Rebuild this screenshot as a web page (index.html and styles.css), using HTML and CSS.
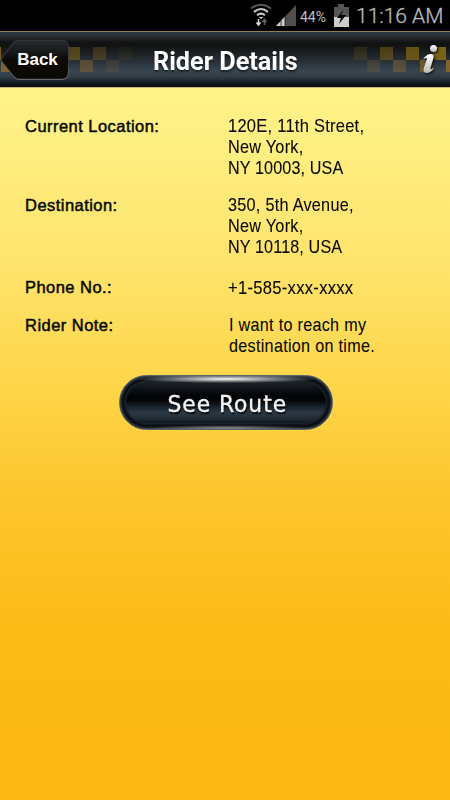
FILE: index.html
```html
<!DOCTYPE html>
<html lang="en">
<head>
<meta charset="utf-8">
<title>Rider Details</title>
<link rel="stylesheet" href="styles.css">
</head>
<body>
<div class="status">
  <svg class="status-icons" width="58" height="31" viewBox="0 0 58 31">
    <g fill="none" stroke-width="2">
      <path d="M1 8.500Q11 1 21 8.500" stroke="#555"/>
      <path d="M4 12Q11 6 18 12M7 15.300Q11 12 15 15.300" stroke="#c8c8c8"/>
    </g>
    <path d="M8.500 17h5l-2.500 2z" fill="#ccc"/>
    <path d="M8.500 19v6M6.500 22.500l2 2.500 2-2.500" stroke="#ddd" stroke-width="1.500" fill="none"/>
    <path d="M14.500 25v-5.500M12.500 22l2-2.500 2 2.500" stroke="#666" stroke-width="1.500" fill="none"/>
    <path d="M26 26L46 5V26Z" fill="#505050"/>
    <path d="M26 26L35 16.500V26Z" fill="#ccc"/>
    <path d="M31 20v6M35 16v10" stroke="#000" stroke-width=".7"/>
  </svg>
  <span class="percent">44%</span>
  <svg class="battery" width="17" height="31" viewBox="0 0 17 31">
    <path d="M5 4h6v3h5v20H1V7h4z" fill="#555"/>
    <path d="M1 17h15v10H1z" fill="#ccc"/>
    <path d="M11 9L4 18h4l-2 6 7-9H8z" fill="#000"/>
  </svg>
  <span class="time">11:16 AM</span>
</div>
<header class="bar">
  <svg class="checks" width="450" height="26" viewBox="0 0 450 26">
    <g fill="#806414">
      <path d="M0 0h1v13H0zM433 0h13v13h-13z" opacity=".95"/>
      <path d="M406 0h13v13h-13z" opacity=".75"/>
      <path d="M380 0h13v13h-13z" opacity=".5"/>
      <path d="M68 0h12v13H68z" opacity=".55"/>
      <path d="M93 0h13v13H93z" opacity=".36"/>
      <path d="M354 0h13v13h-13z" opacity=".2"/>
      <path d="M119 0h13v13h-13z" opacity=".08"/>
    </g>
    <g fill="#86652b">
      <path d="M1 13h13v12H1zM446 13h4v12h-4z" opacity=".95"/>
      <path d="M420 13h13v12h-13z" opacity=".75"/>
      <path d="M393 13h13v12h-13zM80 13h13v12H80z" opacity=".48"/>
      <path d="M367 13h13v12h-13z" opacity=".25"/>
      <path d="M106 13h13v12h-13z" opacity=".17"/>
    </g>
  </svg>
  <a class="back">
    <svg class="back-shape" width="70" height="42" viewBox="0 0 70 42">
      <defs><linearGradient id="back" x2="0" y2="1"><stop offset="0" stop-color="#272c30"/><stop offset=".42" stop-color="#101010"/><stop offset=".5" stop-color="#0e0a04"/><stop offset="1" stop-color="#0b0903"/></linearGradient>
      <linearGradient id="edge" x2="0" y2="1"><stop offset="0" stop-color="#32383d"/><stop offset=".6" stop-color="#3a4046"/><stop offset="1" stop-color="#777b7e"/></linearGradient></defs>
      <path d="M1 21Q10 7 14 3Q16 1.500 19 1.500H62Q68.500 1.500 68.500 8V33Q68.500 40.300 62 40.300H19Q16 40.300 14 38Z" fill="url(#back)" stroke="url(#edge)"/>
    </svg>
    <span class="back-label">Back</span>
  </a>
  <h1 class="title">Rider Details</h1>
  <svg class="info" width="18" height="34" viewBox="0 0 18 34">
    <defs><linearGradient id="silver" x2="0" y2="1"><stop offset="0" stop-color="#fff"/><stop offset="1" stop-color="#bbb"/></linearGradient></defs>
    <g fill="url(#silver)">
      <circle cx="12.500" cy="5.500" r="3.500"/>
      <path d="M2 16.500Q5 11.500 9 11Q13.500 10.500 12.500 15L9.500 25Q9 27.500 13 24.500Q11 29.500 6 29.900Q1.500 29.800 2.800 25L5.800 16.500Q6.300 13.500 2 16.500Z"/>
    </g>
  </svg>
</header>
<main class="page">
  <dl class="details">
    <div class="row row-location"><dt>Current Location:</dt><dd><span class="line wide">120E, 11th Street,</span><span class="line">New York,</span><span class="line narrow">NY 10003, USA</span></dd></div>
    <div class="row row-destination"><dt>Destination:</dt><dd><span class="line">350, 5th Avenue,</span><span class="line">New York,</span><span class="line narrow">NY 10118, USA</span></dd></div>
    <div class="row row-phone"><dt>Phone No.:</dt><dd><span class="line phone">+1-585-xxx-xxxx</span></dd></div>
    <div class="row"><dt>Rider Note:</dt><dd><span class="line note">I want to reach my</span><span class="line note">destination on time.</span></dd></div>
  </dl>
  <button class="route"><span class="route-label">See Route</span></button>
</main>
</body>
</html>
```

FILE: styles.css
```css
* { box-sizing: border-box; }
body {
  margin: 0;
  width: 450px;
  height: 800px;
  overflow: hidden;
  background: #000;
  font-family: "Liberation Sans", sans-serif;
}
.status {
  display: flex;
  align-items: center;
  height: 31px;
  padding-left: 250px;
  color: #bdbdbd;
  font-family: Roboto, sans-serif;
  white-space: nowrap;
}
.status-icons { margin-right: -8px; flex: none; }
.percent { width: 33px; font-size: 14px; padding-top: 2px; }
.battery { flex: none; }
.time { margin-left: 6px; font-size: 21px; font-weight: 300; -webkit-text-stroke: .3px #bdbdbd; }
.bar {
  position: relative;
  display: flex;
  align-items: center;
  height: 56px;
  border-top: 1px solid #8d8150;
  background: linear-gradient(#2c3841 0, #29323a 3px, #111 11px, #131414 15px, #2b343c 31px, #394651 39px, #303b44 45px, #11151a 52px, #07090e 55px);
}
.checks { position: absolute; left: 0; top: 15px; }
.back {
  position: relative;
  display: flex;
  align-items: center;
  justify-content: center;
  width: 70px;
  height: 42px;
  padding: 1px 0 0 5px;
  color: #fff;
  font-size: 17px;
  font-weight: bold;
}
.back-shape { position: absolute; left: 0; top: 0; }
.back-label { position: relative; }
.title {
  flex: 1;
  margin: 3px 0 0 83px;
  color: #fff;
  font: bold 25px Roboto, sans-serif;
  white-space: nowrap;
  transform: scaleX(1.01);
  transform-origin: left;
  text-shadow: 0 2px 2px #0008;
}
.info { margin-right: 11px; filter: drop-shadow(1px 1px 1px #000); }
.page {
  height: 713px;
  padding-top: 28px;
  border-top: 1px solid #c9bd70;
  background: linear-gradient(#fff388 0, #fff085 40px, #fee36a 185px, #fed548 300px, #fdc52d 410px, #fcbb16 540px, #fcb813 713px);
}
.details { margin: 0 25px; }
.row { display: flex; color: #090900; }
.row-location { height: 79px; }
.row-destination { height: 82px; }
.row-phone { height: 38px; }
dt {
  width: 203px;
  flex: none;
  font-size: 16.5px;
  line-height: 21px;
  letter-spacing: .46px;
  -webkit-text-stroke: .5px #090900;
}
dd {
  margin: -1px 0 0;
  width: 200px;
  font-size: 19px;
  line-height: 21px;
  white-space: nowrap;
}
.line {
  display: block;
  letter-spacing: .3px;
  transform: scaleX(.855);
  transform-origin: left;
  -webkit-text-stroke: .1px #090900;
}
.wide { transform: scaleX(.867); }
.narrow { letter-spacing: .15px; transform: scaleX(.85); }
.phone { letter-spacing: .3px; transform: scaleX(.875); margin-top: 1px; }
.note { letter-spacing: .35px; transform: translateX(1px) scaleX(.85); }
.route {
  position: relative;
  display: flex;
  align-items: center;
  justify-content: center;
  width: 214px;
  height: 55px;
  margin: 19px 0 0 119px;
  padding: 0;
  border: 1px solid #59636a;
  border-radius: 28px;
  background: linear-gradient(#28333d 0, #1c242c 6px, #030405 19px, #030405 24px, #1a242d 31px, #2b3843 37px, #202a33 43px, #05070a 51px, #15191c 54px);
  box-shadow: inset 0 0 2px 1px #44525d, inset 0 0 2px 5px #0a0e12, inset 0 0 1px 6px #252f37;
}
.route::before {
  content: "";
  position: absolute;
  inset: 0;
  border-radius: 27px;
  background:
    radial-gradient(ellipse 92px 4px at 50% 3px, #fff, #fff0),
    radial-gradient(ellipse 80px 3px at 50% 52px, #888, #8880);
}
.route-label {
  position: relative;
  top: 1px;
  left: 1px;
  color: #f4f4f6;
  font: 23.5px "DejaVu Sans", sans-serif;
  letter-spacing: 1px;
  transform: scaleX(.93);
  -webkit-text-stroke: .4px #f4f4f6;
  text-shadow: 1px 2px 1px #000;
}
```
